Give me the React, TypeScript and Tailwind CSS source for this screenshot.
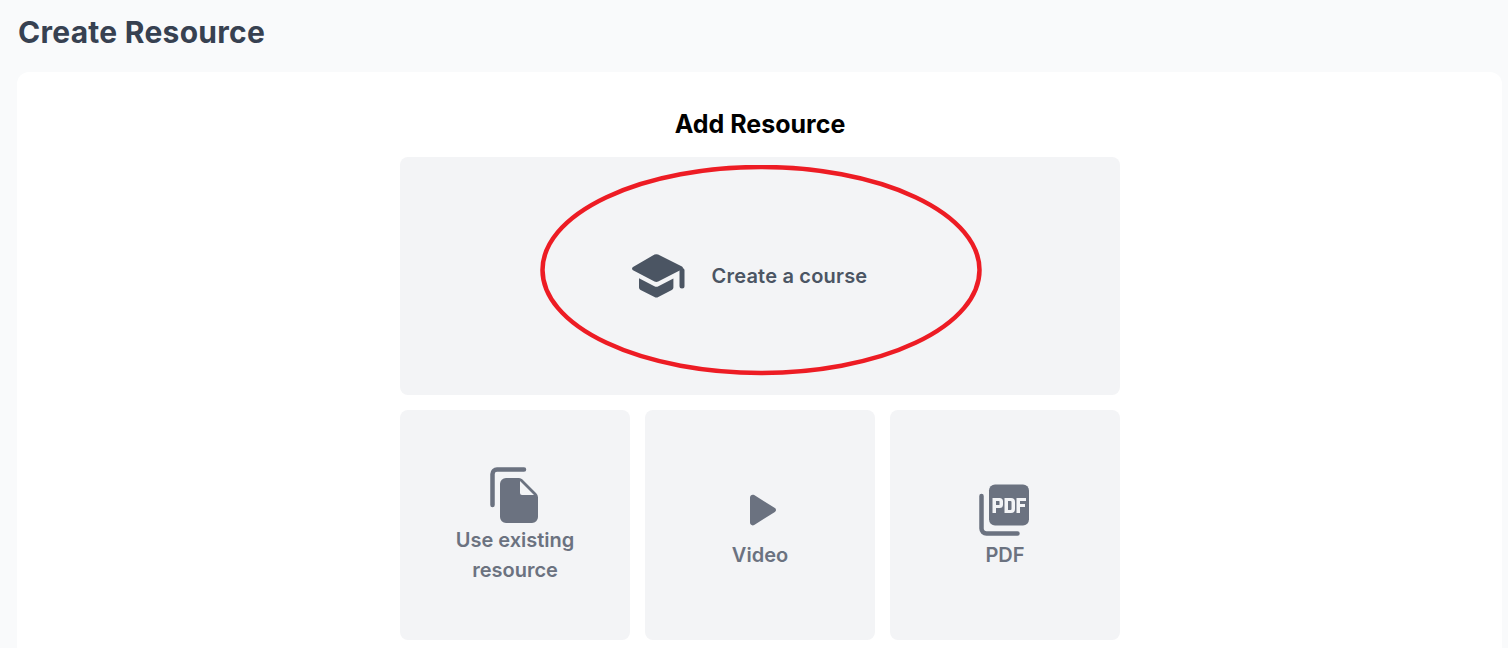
import React from 'react';

function CapIcon() {
  return (
    <svg width="53" height="44" viewBox="0 0 53 44" className="text-[#4b5563]" fill="currentColor">
      <path d="M22.500.6a4 4 0 0 1 3.600 0L50 12.400c1.200.6 1.300 2.200.1 2.800L26.200 27.400a4 4 0 0 1-3.700 0L1 16.200c-1.300-.7-1.300-2.500 0-3.200z" />
      <path d="M7 24.200 22.400 32.300a4.400 4.400 0 0 0 4 0L41.400 24.400V33.500a3 3 0 0 1-1.600 2.600L26.300 43a4 4 0 0 1-3.800 0L8.600 36a3 3 0 0 1-1.600-2.600z" />
      <rect x="47.500" y="14" width="5" height="20.500" rx="2.500" />
    </svg>
  );
}

function FilesIcon() {
  return (
    <svg width="50" height="56" viewBox="0 0 50 56" fill="none" className="text-[#6b7280]">
      <path d="M2.500 38V7a4.500 4.500 0 0 1 4.500-4.500h27" stroke="currentColor" strokeWidth="4.500" strokeLinecap="round" />
      <path d="M16 11h13a5 5 0 0 1 3.500 1.500l13.500 13.500a6 6 0 0 1 2 4.200V50a6 6 0 0 1-6 6H16a6 6 0 0 1-6-6V17a6 6 0 0 1 6-6z" fill="currentColor" />
      <path d="M30 14 44 28H32a2 2 0 0 1-2-2z" fill="#f3f4f6" />
    </svg>
  );
}

function PlayIcon() {
  return (
    <svg width="28" height="32" viewBox="0 0 28 32" className="text-[#6b7280]" fill="currentColor">
      <path d="M1 3.500C1 1.200 3.300 0 5.200 1.100l20.700 13c1.500 1 1.500 3 0 3.900L5.200 31c-1.900 1.100-4.200-.1-4.200-2.400z" />
    </svg>
  );
}

function PdfIcon() {
  return (
    <svg width="52" height="52" viewBox="0 0 52 52" fill="none" className="text-[#6b7280]">
      <path d="M2.500 12v32.500a5 5 0 0 0 5 5h31" stroke="currentColor" strokeWidth="4.500" strokeLinecap="round" />
      <rect x="10" y="0.500" width="40" height="41" rx="6" fill="currentColor" />
      <path
        fillRule="evenodd"
        fill="#f3f4f6"
        d="M13.500 14h7a3.500 3.500 0 0 1 3.500 3.500v3a3.500 3.500 0 0 1-3.500 3.500H17v5h-3.500zM17 17v4h3a.5.5 0 0 0 .5-.5v-3a.5.5 0 0 0-.5-.5zM25.500 14H32a4 4 0 0 1 4 4v7a4 4 0 0 1-4 4h-6.500zM29 17v9h2.500a1 1 0 0 0 1-1v-7a1 1 0 0 0-1-1zM37.500 14H47v3h-6v3h5v3h-5v6h-3.500z"
      />
    </svg>
  );
}

function SmallTile({ icon, label }: { icon: React.ReactNode; label: React.ReactNode }) {
  return (
    <div className="flex h-[230px] w-[230px] flex-col items-center justify-center rounded-lg bg-gray-100 text-center text-xl leading-[30px] font-semibold text-[#6b7280]">
      {icon}
      <span>{label}</span>
    </div>
  );
}

export default function App() {
  return (
    <div
      className="h-[648px] overflow-hidden bg-gray-50 pr-[6px] pl-[17px]"
      style={{ fontFamily: 'Inter, "Liberation Sans", sans-serif' }}
    >
      <h1 className="ml-px pt-[14px] text-3xl leading-9 font-bold tracking-[0.27px] text-[#374151]">Create Resource</h1>

      <div className="mt-[22px] h-[640px] rounded-xl bg-white pt-[36px] pl-px">
        <div className="mx-auto w-[720px]">
          <h2 className="text-center text-[25px] leading-8 font-bold text-black">Add Resource</h2>

          <div className="relative mt-[17px] flex h-[238px] items-center justify-center gap-[27px] rounded-lg bg-gray-100 pr-[21px]">
            <div className="mb-[1px]">
              <CapIcon />
            </div>
            <span className="text-xl font-semibold tracking-[0.2px] text-[#4b5563]">Create a course</span>
            {/* hand drawn highlight over the tile */}
            <svg className="absolute top-[8px] left-[140px]" width="442" height="212" viewBox="0 0 442 212" fill="none">
              <ellipse cx="221" cy="105" rx="218.500" ry="103" stroke="#ed1c24" strokeWidth="4.500" />
            </svg>
          </div>

          <div className="mt-[15px] flex gap-[15px]">
            <SmallTile
              icon={
                <div className="mb-[2px] pt-[2px]">
                  <FilesIcon />
                </div>
              }
              label={
                <>
                  Use existing
                  <br />
                  resource
                </>
              }
            />
            <SmallTile
              icon={
                <div className="mb-[14px] pt-[14px] pl-[5px]">
                  <PlayIcon />
                </div>
              }
              label="Video"
            />
            <SmallTile
              icon={
                <div className="mb-[4px] pt-[4px]">
                  <PdfIcon />
                </div>
              }
              label="PDF"
            />
          </div>
        </div>
      </div>
    </div>
  );
}
